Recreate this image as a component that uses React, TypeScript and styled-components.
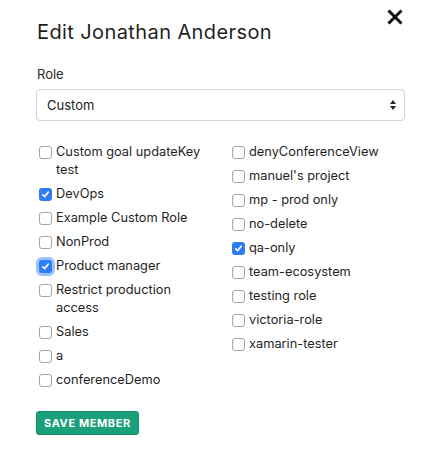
import React, { useState } from 'react'
import styled, { createGlobalStyle } from 'styled-components'

const GlobalStyle = createGlobalStyle`
   body {
      margin: 0;
      background: #fff;
      font-family: Inter, "Noto Sans", "Liberation Sans", sans-serif;
      color: #222;
   }
`

const Modal = styled.div`
   position: relative;
   width: 444px;
   height: 456px;
   box-sizing: border-box;
   padding: 19px 39px 0 36px;
`

const Title = styled.h2`
   margin: 0 0 0 1px;
   font-size: 20px;
   font-weight: 400;
   line-height: 26px;
   letter-spacing: 0.4px;
   color: #1f1f1f;
`

const Close = styled.button`
   position: absolute;
   top: 9px;
   right: 41px;
   width: 16px;
   height: 16px;
   padding: 0;
   border: 0;
   background: none;
   cursor: pointer;
`

const Label = styled.div`
   margin: 20px 0 0 1px;
   font-size: 13px;
   line-height: 18px;
   color: #2a2a2a;
`

const Select = styled.div`
   display: flex;
   align-items: center;
   justify-content: space-between;
   margin-top: 6px;
   height: 32px;
   box-sizing: border-box;
   padding: 0 7px 0 10px;
   border: 1px solid #d3d3d3;
   border-radius: 4px;
   font-size: 13px;
   color: #222;
`

const RoleGrid = styled.div`
   display: grid;
   grid-template-columns: 193px 1fr;
   margin-top: 22px;
   padding-left: 3px;
`

const Column = styled.div`
   display: flex;
   flex-direction: column;
   gap: 6px;
`

const Item = styled.label`
   display: flex;
   align-items: flex-start;
   gap: 4px;
   font-size: 12.8px;
   line-height: 18px;
   color: #1f1f1f;
   max-width: 176px;
`

const Box = styled.span<{ $checked: boolean; $focused?: boolean }>`
   flex: none;
   display: flex;
   align-items: center;
   justify-content: center;
   width: 13px;
   height: 13px;
   margin-top: 2.5px;
   box-sizing: border-box;
   border-radius: 3px;
   border: ${(p) => (p.$checked ? '0' : '1px solid #a5a5a5')};
   background: ${(p) => (p.$checked ? '#2f7df6' : '#fff')};
   box-shadow: ${(p) => (p.$focused ? '0 0 0 3px #9ec3fa' : 'none')};
`

const SaveButton = styled.button`
   display: block;
   margin-top: 22px;
   height: 24px;
   padding: 0 7px;
   border: 1px solid #178f6a;
   border-radius: 3px;
   background: #1aa07a;
   color: #fff;
   font-family: inherit;
   font-size: 11px;
   font-weight: 700;
   letter-spacing: 0.6px;
   text-transform: uppercase;
`

type Role = { name: string; checked?: boolean; focused?: boolean }

const left: Role[] = [
   { name: 'Custom goal updateKey test' },
   { name: 'DevOps', checked: true },
   { name: 'Example Custom Role' },
   { name: 'NonProd' },
   { name: 'Product manager', checked: true, focused: true },
   { name: 'Restrict production access' },
   { name: 'Sales' },
   { name: 'a' },
   { name: 'conferenceDemo' },
]

const right: Role[] = [
   { name: 'denyConferenceView' },
   { name: "manuel's project" },
   { name: 'mp - prod only' },
   { name: 'no-delete' },
   { name: 'qa-only', checked: true },
   { name: 'team-ecosystem' },
   { name: 'testing role' },
   { name: 'victoria-role' },
   { name: 'xamarin-tester' },
]

const RoleCheck: React.FC<{ role: Role }> = ({ role }) => {
   const [checked, setChecked] = useState(!!role.checked)
   return (
      <Item onClick={() => setChecked(!checked)}>
         <Box $checked={checked} $focused={role.focused}>
            {checked && (
               <svg width="9" height="9" viewBox="0 0 9 9">
                  <path d="M1.8 4.8 L3.7 6.6 L7.2 2.2" fill="none" stroke="#fff" strokeWidth="1.6" strokeLinecap="round" strokeLinejoin="round" />
               </svg>
            )}
         </Box>
         <span>{role.name}</span>
      </Item>
   )
}

const App: React.FC = () => (
   <>
      <GlobalStyle />
      <Modal>
         <Close aria-label="Close">
            <svg width="16" height="16" viewBox="0 0 16 16">
               <path d="M2.5 2.5 L13.5 13.5 M13.5 2.5 L2.5 13.5" stroke="#111" strokeWidth="3" strokeLinecap="square" />
            </svg>
         </Close>
         <Title>Edit Jonathan Anderson</Title>
         <Label>Role</Label>
         <Select>
            <span>Custom</span>
            <svg width="8" height="12" viewBox="0 0 8 12">
               <path d="M4 1 L7 5 L1 5 Z M4 11 L7 7 L1 7 Z" fill="#222" />
            </svg>
         </Select>
         <RoleGrid>
            <Column>
               {left.map((r) => (
                  <RoleCheck key={r.name} role={r} />
               ))}
            </Column>
            <Column>
               {right.map((r) => (
                  <RoleCheck key={r.name} role={r} />
               ))}
            </Column>
         </RoleGrid>
         <SaveButton>Save member</SaveButton>
      </Modal>
   </>
)

export default App
